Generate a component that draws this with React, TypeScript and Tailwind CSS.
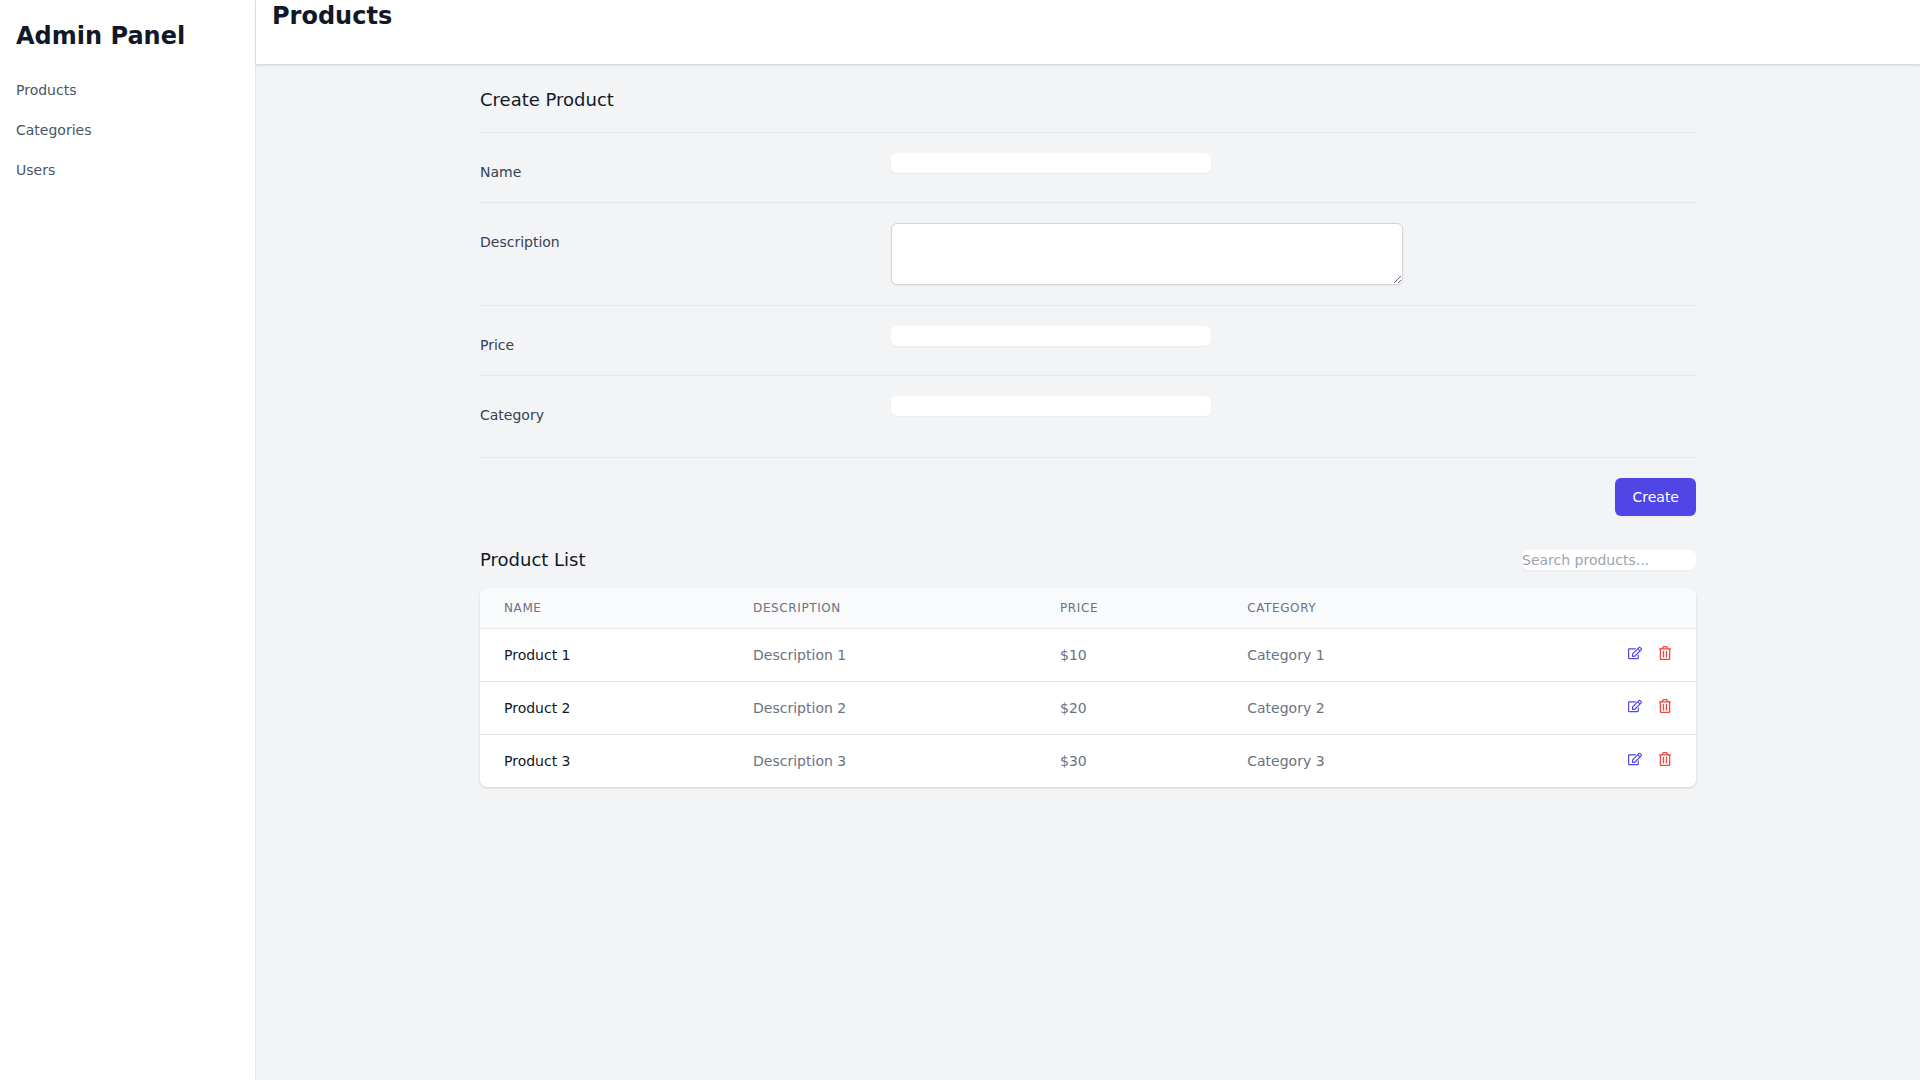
import { FaRegEdit, FaRegTrashAlt } from "react-icons/fa";

const products = [
  { name: "Product 1", description: "Description 1", price: "$10", category: "Category 1" },
  { name: "Product 2", description: "Description 2", price: "$20", category: "Category 2" },
  { name: "Product 3", description: "Description 3", price: "$30", category: "Category 3" },
];

const Field = ({ label }: { label: string }) => (
  <div className="grid grid-cols-3 items-start gap-4 border-t border-[#e5e7eb] pt-5">
    <label className="mt-px block pt-2 text-sm font-medium text-[#374151]">{label}</label>
    <div className="col-span-2 mt-0">
      <input type="text" className="block w-full max-w-xs rounded-md bg-white text-sm shadow-xs" />
    </div>
  </div>
);

const App = () => {
  return (
    <div className="flex h-screen bg-[#f3f4f6] font-['DejaVu_Sans',sans-serif] antialiased">
      <aside className="w-64 shrink-0 border-r border-[#e5e7eb] bg-white">
        <div className="px-4 py-5">
          <h1 className="text-2xl font-bold text-[#111827]">Admin Panel</h1>
        </div>
        <nav className="flex flex-col gap-1">
          {["Products", "Categories", "Users"].map((item) => (
            <a key={item} href="#" className="block px-4 py-2 text-sm text-[#4b5563]">
              {item}
            </a>
          ))}
        </nav>
      </aside>
      <div className="flex min-w-0 flex-1 flex-col">
        <header className="h-16 shrink-0 bg-white px-4 shadow-[0_1px_3px_0_rgb(0_0_0/0.1),0_1px_2px_0_rgb(0_0_0/0.06)]">
          <h2 className="text-2xl font-bold text-[#111827]">Products</h2>
        </header>
        <main className="flex-1 overflow-auto">
          <div className="mx-auto max-w-7xl px-8 pt-[22px] pb-6">
            <h3 className="text-lg font-medium text-[#111827]">Create Product</h3>
            <div className="mt-[18px] space-y-5">
              <Field label="Name" />
              <div className="grid grid-cols-3 items-start gap-4 border-t border-[#e5e7eb] pt-5">
                <label className="mt-px block pt-2 text-sm font-medium text-[#374151]">Description</label>
                <div className="col-span-2">
                  <textarea rows={3} className="block w-full max-w-lg rounded-md border border-[#d1d5db] bg-white text-sm shadow-xs" />
                </div>
              </div>
              <Field label="Price" />
              <Field label="Category" />
            </div>
            <div className="mt-8 border-t border-[#e5e7eb] pt-5">
              <div className="flex justify-end">
                <button className="rounded-md border border-transparent bg-[#4f46e5] px-4 py-2 text-sm font-medium text-white shadow-xs">
                  Create
                </button>
              </div>
            </div>
            <div className="mt-[30px]">
              <div className="flex items-center justify-between">
                <h3 className="text-lg font-medium text-[#111827]">Product List</h3>
                <input
                  type="text"
                  placeholder="Search products..."
                  className="block rounded-md bg-white text-sm shadow-xs placeholder:text-[#9ca3af]"
                />
              </div>
              <div className="mt-3.5 overflow-hidden rounded-lg shadow-[0_1px_3px_0_rgb(0_0_0/0.1),0_1px_2px_0_rgb(0_0_0/0.06)]">
                <table className="min-w-full divide-y divide-[#e5e7eb]">
                  <thead className="bg-[#f9fafb]">
                    <tr>
                      {["Name", "Description", "Price", "Category"].map((col) => (
                        <th key={col} className="px-6 py-3 text-left text-xs font-medium tracking-wider text-[#6b7280] uppercase">
                          {col}
                        </th>
                      ))}
                      <th className="px-6 py-3" />
                    </tr>
                  </thead>
                  <tbody className="divide-y divide-[#e5e7eb] bg-white">
                    {products.map((p) => (
                      <tr key={p.name}>
                        <td className="px-6 py-4 text-sm font-medium whitespace-nowrap text-[#111827]">{p.name}</td>
                        <td className="px-6 py-4 text-sm whitespace-nowrap text-[#6b7280]">{p.description}</td>
                        <td className="px-6 py-4 text-sm whitespace-nowrap text-[#6b7280]">{p.price}</td>
                        <td className="px-6 py-4 text-sm whitespace-nowrap text-[#6b7280]">{p.category}</td>
                        <td className="px-6 py-4 text-right text-sm font-medium whitespace-nowrap">
                          <a href="#" className="inline-block text-[#4f46e5]">
                            <FaRegEdit />
                          </a>
                          <a href="#" className="ml-4 inline-block text-[#ef4444]">
                            <FaRegTrashAlt />
                          </a>
                        </td>
                      </tr>
                    ))}
                  </tbody>
                </table>
              </div>
            </div>
          </div>
        </main>
      </div>
    </div>
  );
};

export default App;
